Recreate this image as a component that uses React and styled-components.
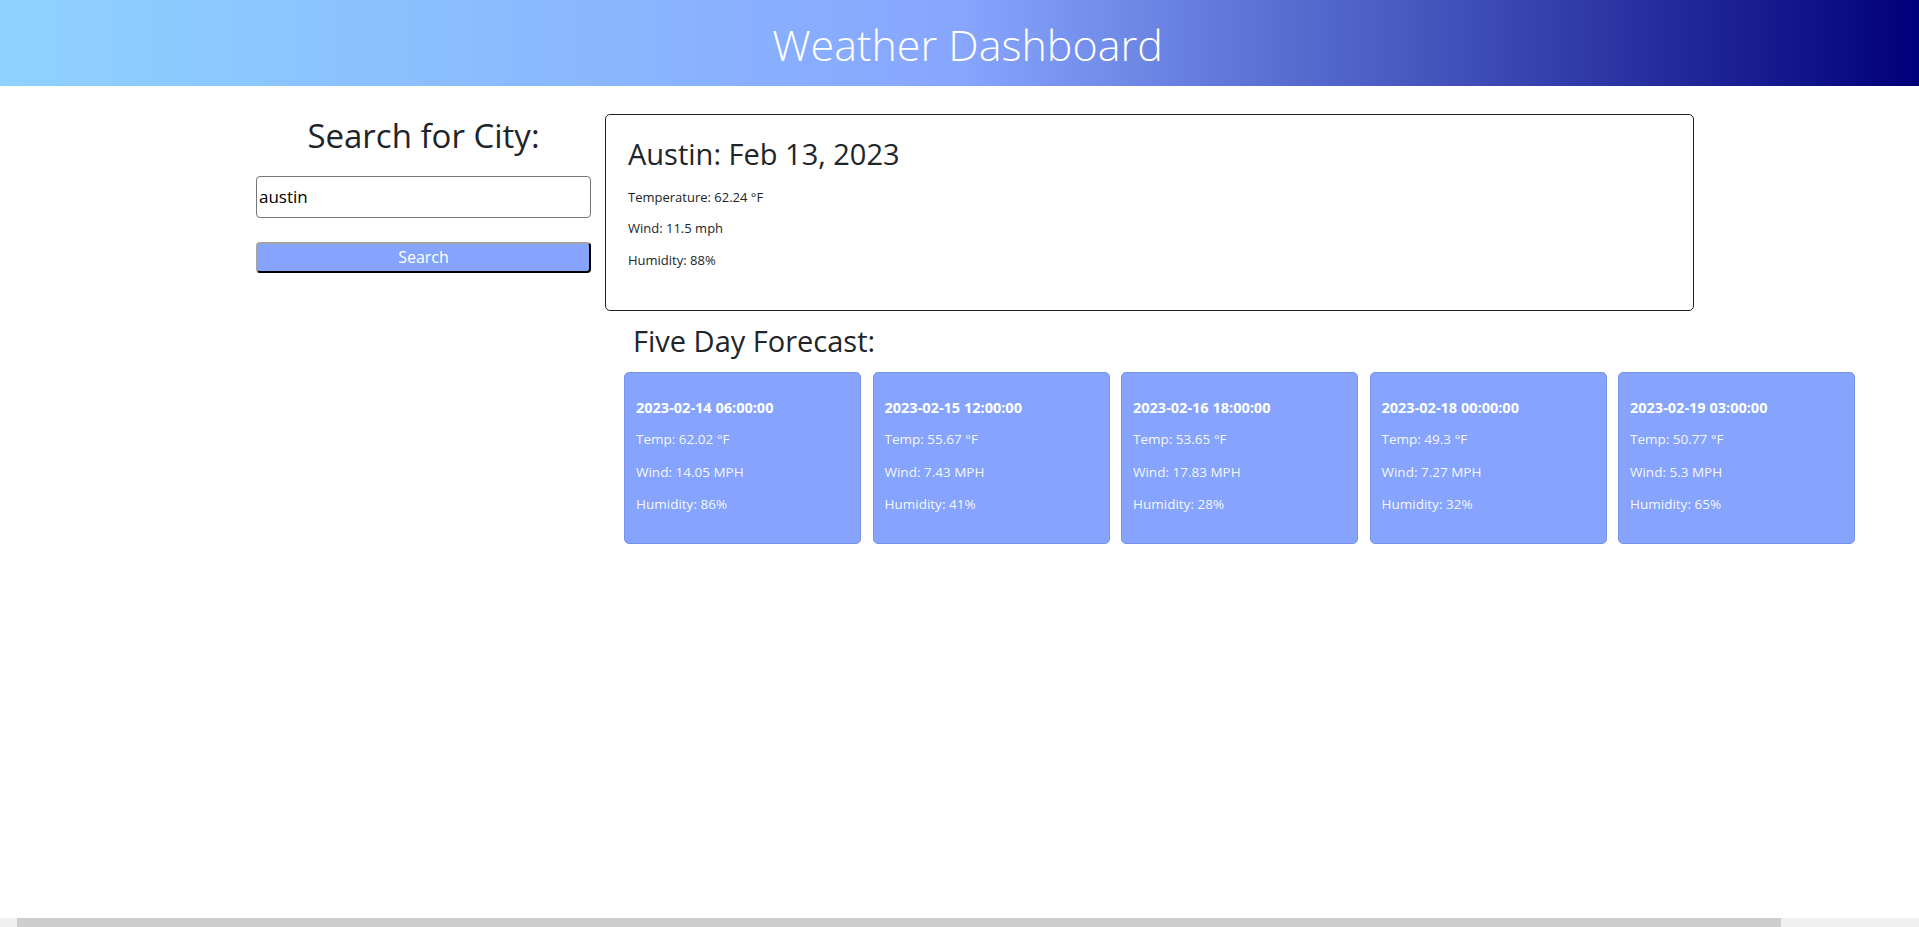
import React from 'react'
import styled, { createGlobalStyle } from 'styled-components'

const GlobalStyle = createGlobalStyle`
body {
  margin: 0;
  background: #fff;
  color: #212529;
  font-family: "Open Sans", "Noto Sans", Arial, sans-serif;
  overflow: hidden;
}
* { box-sizing: border-box; }
`;

const Header = styled.header`
height: 86px;
display: flex;
align-items: center;
justify-content: center;
padding: 3px 0 0 16px;
background: linear-gradient(to right, #8ed2ff 0%, #87a6fe 50%, #00007a 100%);
`;

const Title = styled.h1`
margin: 0;
color: #fff;
font-size: 43px;
font-weight: 300;
line-height: 1.2;
`;

const Main = styled.main`
display: flex;
align-items: flex-start;
gap: 14px;
padding: 28px 0 0 256px;
`;

const SearchCol = styled.section`
width: 335px;
display: flex;
flex-direction: column;
`;

const SearchHeading = styled.h2`
margin: 2px 0 20px;
font-size: 33px;
font-weight: 400;
line-height: 1.2;
text-align: center;
`;

const CityInput = styled.input`
height: 42px;
width: 100%;
padding: 0 2px;
border: 1px solid #767676;
border-radius: 4px;
font-family: inherit;
font-size: 17px;
color: #000;
margin-bottom: 24px;
`;

const SearchButton = styled.button`
height: 31px;
width: 100%;
background: #86a4fd;
color: #fff;
font-family: inherit;
font-size: 16px;
border: 2px outset #a4a4a4;
border-bottom-color: #555;
border-right-color: #555;
border-radius: 4px;
padding: 0;
`;

const ResultCol = styled.section`
width: 1089px;
display: flex;
flex-direction: column;
`;

const TodayBox = styled.div`
border: 1px solid #222;
border-radius: 5px;
padding: 22px 22px 11px;
height: 197px;
`;

const TodayTitle = styled.h3`
margin: 0 0 15px;
font-size: 29px;
font-weight: 400;
line-height: 1.2;
`;

const Stat = styled.p`
margin: 0 0 10.5px;
font-size: 13px;
line-height: 21px;
color: #212529;
`;

const ForecastHeading = styled.h3`
margin: 13px 0 13px 28px;
font-size: 29px;
font-weight: 400;
line-height: 1.2;
`;

const CardRow = styled.div`
display: flex;
gap: 11.5px;
margin-left: 19px;
`;

const Card = styled.div`
flex: 0 0 237px;
background: #86a4fd;
border: 1px solid #7893e8;
border-radius: 5px;
padding: 24px 11px 16px;
`;

const CardLine = styled.p`
margin: 0 0 11.5px;
font-size: ${p => (p.$bold ? '14.5px' : '13.5px')};
line-height: 21px;
font-weight: ${p => (p.$bold ? 700 : 400)};
color: ${p => (p.$bold ? '#fff' : 'rgba(255,255,255,0.93)')};
`;

const ScrollTrack = styled.div`
position: fixed;
left: 0;
right: 0;
bottom: 0;
height: 9px;
background: #f0f0f0;
`;

const ScrollThumb = styled.div`
position: absolute;
left: 17px;
top: 0;
bottom: 0;
width: 1764px;
background: #cdcdcd;
`;

const forecast = [
  { date: '2023-02-14 06:00:00', temp: '62.02', wind: '14.05', hum: '86' },
  { date: '2023-02-15 12:00:00', temp: '55.67', wind: '7.43', hum: '41' },
  { date: '2023-02-16 18:00:00', temp: '53.65', wind: '17.83', hum: '28' },
  { date: '2023-02-18 00:00:00', temp: '49.3', wind: '7.27', hum: '32' },
  { date: '2023-02-19 03:00:00', temp: '50.77', wind: '5.3', hum: '65' },
];

export default function App() {
  return (
    <>
      <GlobalStyle />
      <Header>
        <Title>Weather Dashboard</Title>
      </Header>
      <Main>
        <SearchCol>
          <SearchHeading>Search for City:</SearchHeading>
          <CityInput defaultValue="austin" />
          <SearchButton>Search</SearchButton>
        </SearchCol>
        <ResultCol>
          <TodayBox>
            <TodayTitle>Austin: Feb 13, 2023</TodayTitle>
            <Stat>Temperature: 62.24 °F</Stat>
            <Stat>Wind: 11.5 mph</Stat>
            <Stat>Humidity: 88%</Stat>
          </TodayBox>
          <ForecastHeading>Five Day Forecast:</ForecastHeading>
          <CardRow>
            {forecast.map(d => (
              <Card key={d.date}>
                <CardLine $bold>{d.date}</CardLine>
                <CardLine>Temp: {d.temp} °F</CardLine>
                <CardLine>Wind: {d.wind} MPH</CardLine>
                <CardLine>Humidity: {d.hum}%</CardLine>
              </Card>
            ))}
          </CardRow>
        </ResultCol>
      </Main>
      <ScrollTrack>
        <ScrollThumb />
      </ScrollTrack>
    </>
  )
}
